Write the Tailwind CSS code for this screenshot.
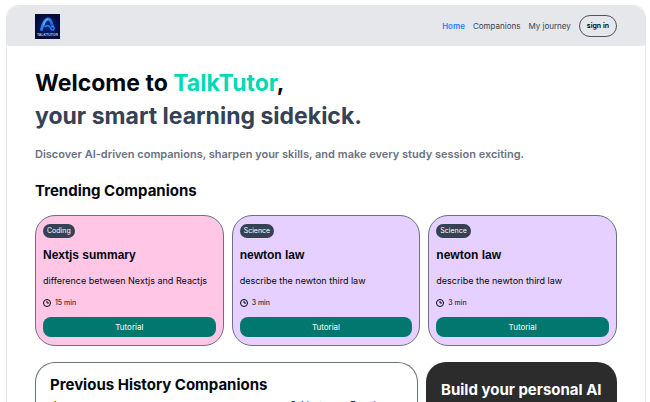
<!DOCTYPE html>
<html lang="en">
<head>
<meta charset="utf-8">
<meta name="viewport" content="width=device-width, initial-scale=1">
<title>TalkTutor</title>
<script src="https://cdn.jsdelivr.net/npm/@tailwindcss/browser@4"></script>
</head>
<body class="h-screen overflow-hidden bg-white pt-[5px] pr-1 pl-1.5 font-[Inter,sans-serif] text-[9px] text-gray-950">
<div class="min-h-full rounded-t-xl border border-gray-200 bg-white">
  <header class="flex h-10 items-center justify-between rounded-t-xl rounded-b-xs bg-gray-200 px-7">
    <a href="#" aria-label="TalkTutor home">
      <svg class="size-[25px]" viewBox="0 0 50 50" role="img" aria-label="TalkTutor logo">
        <defs>
          <radialGradient id="night"><stop offset="0" stop-color="#072979"/><stop offset="1" stop-color="#020b3c"/></radialGradient>
          <linearGradient id="glow" x1="0" y1="0" x2="1" y2="1"><stop offset="0" stop-color="#42a5ff"/><stop offset="1" stop-color="#1246d8"/></linearGradient>
        </defs>
        <rect width="50" height="50" fill="url(#night)"/>
        <path d="M13 31C16 20 19 11 26 10C32 10 34 20 35 25" fill="none" stroke="url(#glow)" stroke-width="6" stroke-linecap="round"/>
        <path d="M20 25C25 22 29 23 31 28C33 34 39 33 38 27C37 24 35 23 34 25" fill="none" stroke="#2584ff" stroke-width="3" stroke-linecap="round"/>
        <path d="M17 23C20 15 22 11 26 10" fill="none" stroke="#83c9ff" stroke-width="1.5"/>
        <text x="25" y="44" text-anchor="middle" font-family="Liberation Sans, sans-serif" font-size="7" font-weight="700" fill="#a9c5ee">TALKTUTOR</text>
      </svg>
    </a>
    <nav class="flex items-center gap-2 text-[8px] text-gray-700">
      <a href="#" class="font-semibold text-blue-500">Home</a>
      <a href="#">Companions</a>
      <a href="#">My journey</a>
      <button type="button" class="h-[22px] rounded-full border border-gray-600 px-[7px] text-[7px] font-semibold text-black">sign in</button>
    </nav>
  </header>
  <main class="px-7 pt-[21px]">
    <h1 class="text-[23px] leading-[33px] font-bold">Welcome to <span class="text-[#00d9b8]">TalkTutor</span>,<br><span class="text-gray-700">your smart learning sidekick.</span></h1>
    <p class="mt-[11px] text-[11px] leading-5 font-semibold text-gray-500">Discover AI-driven companions, sharpen your skills, and make every study session exciting.</p>
    <h2 class="mt-[17px] text-[15px] leading-5 font-bold">Trending Companions</h2>
    <section class="mt-3.5 grid grid-cols-3 gap-2" aria-label="Trending companions">
      <article class="flex flex-col items-start rounded-[20px] border border-gray-500 bg-[#ffc6e5] px-[7px] py-2">
        <span class="rounded-full bg-gray-700 px-1 text-[7px] leading-3.5 text-white">Coding</span>
        <h3 class="mt-2 font-['Liberation_Sans',Arial,sans-serif] text-xs leading-[19px] font-bold">Nextjs summary</h3>
        <p class="mt-2 leading-4">difference between Nextjs and Reactjs</p>
        <p class="mt-2 flex items-center gap-1 text-[7px] leading-3"><svg class="size-2" viewBox="0 0 16 16" fill="none" stroke="currentColor" stroke-width="2"><circle cx="8" cy="8" r="7"/><path d="M8 4v4h4"/></svg>15 min</p>
        <button type="button" class="mt-2 h-5 w-full rounded-lg bg-[#00786f] text-[8px] text-white">Tutorial</button>
      </article>
      <article class="flex flex-col items-start rounded-[20px] border border-gray-500 bg-[#e5d0ff] px-[7px] py-2">
        <span class="rounded-full bg-gray-700 px-1 text-[7px] leading-3.5 text-white">Science</span>
        <h3 class="mt-2 font-['Liberation_Sans',Arial,sans-serif] text-xs leading-[19px] font-bold">newton law</h3>
        <p class="mt-2 leading-4">describe the newton third law</p>
        <p class="mt-2 flex items-center gap-1 text-[7px] leading-3"><svg class="size-2" viewBox="0 0 16 16" fill="none" stroke="currentColor" stroke-width="2"><circle cx="8" cy="8" r="7"/><path d="M8 4v4h4"/></svg>3 min</p>
        <button type="button" class="mt-2 h-5 w-full rounded-lg bg-[#00786f] text-[8px] text-white">Tutorial</button>
      </article>
      <article class="flex flex-col items-start rounded-[20px] border border-gray-500 bg-[#e5d0ff] px-[7px] py-2">
        <span class="rounded-full bg-gray-700 px-1 text-[7px] leading-3.5 text-white">Science</span>
        <h3 class="mt-2 font-['Liberation_Sans',Arial,sans-serif] text-xs leading-[19px] font-bold">newton law</h3>
        <p class="mt-2 leading-4">describe the newton third law</p>
        <p class="mt-2 flex items-center gap-1 text-[7px] leading-3"><svg class="size-2" viewBox="0 0 16 16" fill="none" stroke="currentColor" stroke-width="2"><circle cx="8" cy="8" r="7"/><path d="M8 4v4h4"/></svg>3 min</p>
        <button type="button" class="mt-2 h-5 w-full rounded-lg bg-[#00786f] text-[8px] text-white">Tutorial</button>
      </article>
    </section>
    <div class="mt-4 grid grid-cols-[2fr_1fr] gap-2">
      <section class="rounded-t-[20px] border border-b-0 border-gray-500 px-3.5 pt-3">
        <h2 class="text-[15px] leading-5 font-bold">Previous History Companions</h2>
        <table class="mt-0.5 w-full table-fixed text-left">
          <thead><tr class="leading-4"><th class="w-[67%] px-1 font-normal">Lessons</th><th class="w-[17%] px-1 font-normal">Subject</th><th class="px-1 font-normal">Duration</th></tr></thead>
        </table>
      </section>
      <section class="rounded-t-[20px] bg-[#2c2c2c] px-3.5 pt-[18px] text-center text-white">
        <h2 class="text-[15px] leading-5 font-bold">Build your personal AI</h2>
      </section>
    </div>
  </main>
</div>
</body>
</html>
